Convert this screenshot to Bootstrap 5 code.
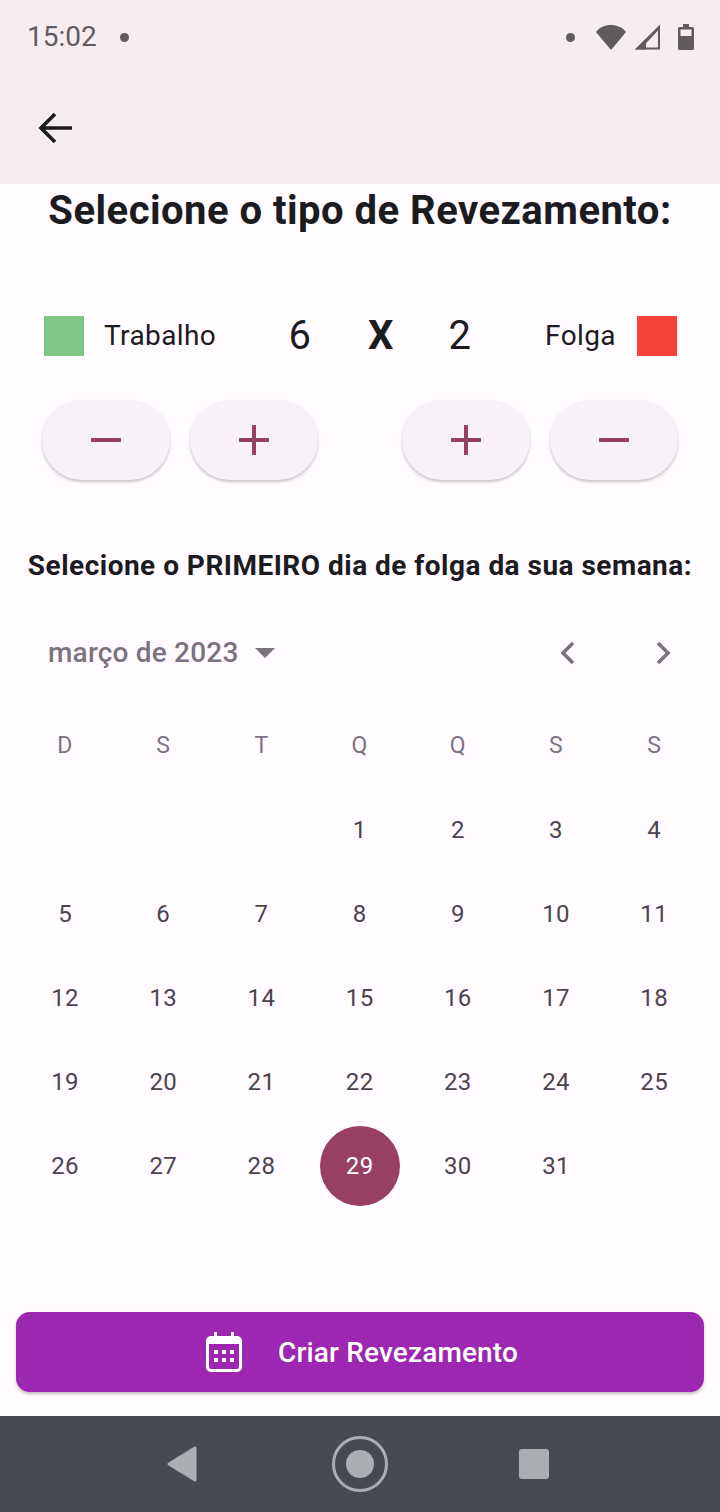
<!DOCTYPE html>
<html lang="pt-BR">
<head>
    <meta charset="UTF-8">
    <meta name="viewport" content="width=device-width, initial-scale=1.0">
    <title>Revezamento</title>
    <link href="https://cdn.jsdelivr.net/npm/bootstrap@5.3.0/dist/css/bootstrap.min.css" rel="stylesheet">
    <style>
        body { width: 720px; height: 1512px; overflow: hidden; background: #fffbfe; color: #1c1b1f; font-family: Roboto, "Liberation Sans", sans-serif; }
        .app-top { height: 184px; background: #f5edf0; }
        .status-bar { height: 72px; padding: 2px 26px 0 27px; color: #5f5b5e; font-size: 28px; }
        .status-dot { width: 9px; height: 9px; border-radius: 50%; background: #5f5b5e; }
        .dot-left { margin-left: 23px; }
        .icon-wifi { margin-left: 21px; }
        .icon-signal { margin-left: 9px; }
        .icon-battery { margin-left: 18px; }
        .back-row { height: 112px; padding-left: 36px; }
        .page-title { margin: 0; height: 52px; padding-top: 1px; font-size: 40px; font-weight: 700; line-height: 52px; letter-spacing: .48px; }
        .counter-row { margin-top: 80px; height: 40px; padding-left: 44px; font-size: 28px; line-height: 42px; letter-spacing: .4px; }
        .swatch { width: 40px; height: 40px; flex: none; }
        .swatch-green { background: #81c784; }
        .swatch-red { background: #f44336; margin: 0 43px 0 21px; }
        .work-label { width: 140px; margin-left: 20px; }
        .count-num { font-size: 40px; text-align: center; }
        .num-left { width: 112px; }
        .num-x { width: 50px; }
        .num-right { width: 108px; }
        .btn-row { margin-top: 44px; padding-left: 42px; gap: 20px; }
        .round-btn { width: 128px; height: 80px; padding: 0; border: 0; border-radius: 40px; background: #f8f2f8; color: #984061; box-shadow: 0 2px 3px rgba(0,0,0,.22); }
        .round-btn:hover { background: #f8f2f8; }
        .round-gap { margin-left: 64px; }
        .pick-title { margin: 66px 0 0; height: 40px; font-size: 28px; font-weight: 700; line-height: 40px; letter-spacing: .48px; }
        .month-row { margin-top: 46px; height: 40px; padding: 2px 49px 0 48px; color: #79747e; font-size: 28px; font-weight: 500; line-height: 40px; letter-spacing: .2px; }
        .chev-next { margin-left: 79px; }
        .cal-grid { display: grid; grid-template-columns: repeat(7, 98.2px); grid-auto-rows: 84px; margin: 32px 0 0 16px; font-size: 24px; letter-spacing: .4px; color: #49454f; }
        .cal-cell { display: flex; align-items: center; justify-content: center; }
        .cal-head { color: #79747e; font-size: 23px; }
        .cal-sel { width: 80px; height: 80px; border-radius: 50%; background: #984061; color: #fff; }
        .make-btn { width: 688px; height: 80px; margin: 104px 16px 0; padding: 0 0 0 4px; border: 0; border-radius: 14px; background: #9c27b0; color: #fff; font-size: 28px; font-weight: 500; letter-spacing: .15px; box-shadow: 0 2px 3px rgba(0,0,0,.25); }
        .make-btn:hover { background: #9c27b0; color: #fff; }
        .make-label { margin-left: 36px; padding-top: 2px; }
        .sys-nav { height: 96px; margin-top: 24px; background: #464b51; }
        .nav-back { margin-left: 166px; }
        .nav-home { margin-left: 132px; }
        .nav-square { margin-left: 128px; }
    </style>
</head>
<body>
    <header class="app-top">
        <div class="status-bar d-flex align-items-center">
            <span>15:02</span>
            <span class="status-dot dot-left"></span>
            <span class="status-dot ms-auto"></span>
            <svg class="icon-wifi" width="30" height="26" viewBox="0 0 30 26"><path d="M0 8C4 3 9 1 15 1s11 2 15 7L15 26z" fill="#5f5b5e"/></svg>
            <svg class="icon-signal" width="25" height="26" viewBox="0 0 25 26"><path d="M0 25.500L25 .5v25z M7 23.500h16V6.500z" fill="#5f5b5e" fill-rule="evenodd"/><path d="M0 25.500l11-11v11z" fill="#5f5b5e"/></svg>
            <svg class="icon-battery" width="16" height="26" viewBox="0 0 16 26"><path d="M5 0h6v3h3.500A1.500 1.500 0 0 1 16 4.500v20a1.500 1.500 0 0 1-1.500 1.500h-13A1.500 1.500 0 0 1 0 24.500v-20A1.500 1.500 0 0 1 1.500 3H5z" fill="#5f5b5e"/><rect x="2.500" y="5.500" width="11" height="6.500" fill="#f5edf0"/></svg>
        </div>
        <div class="back-row d-flex align-items-center">
            <svg width="40" height="40" viewBox="0 0 40 40"><path d="M36 20H6M19 6L5 20l14 14" fill="none" stroke="#1c1b1f" stroke-width="3.600"/></svg>
        </div>
    </header>

    <h1 class="page-title text-center">Selecione o tipo de Revezamento:</h1>

    <div class="counter-row d-flex align-items-center">
        <span class="swatch swatch-green"></span>
        <span class="work-label">Trabalho</span>
        <span class="count-num num-left">6</span>
        <span class="count-num num-x fw-bold">X</span>
        <span class="count-num num-right">2</span>
        <span class="ms-auto">Folga</span>
        <span class="swatch swatch-red"></span>
    </div>

    <div class="btn-row d-flex">
        <button class="btn round-btn" type="button"><svg width="30" height="30" viewBox="0 0 30 30"><rect y="13" width="30" height="4" fill="currentColor"/></svg></button>
        <button class="btn round-btn" type="button"><svg width="30" height="30" viewBox="0 0 30 30"><path d="M0 13h13V0h4v13h13v4H17v13h-4V17H0z" fill="currentColor"/></svg></button>
        <button class="btn round-btn round-gap" type="button"><svg width="30" height="30" viewBox="0 0 30 30"><path d="M0 13h13V0h4v13h13v4H17v13h-4V17H0z" fill="currentColor"/></svg></button>
        <button class="btn round-btn" type="button"><svg width="30" height="30" viewBox="0 0 30 30"><rect y="13" width="30" height="4" fill="currentColor"/></svg></button>
    </div>

    <h2 class="pick-title text-center">Selecione o PRIMEIRO dia de folga da sua semana:</h2>

    <div class="month-row d-flex align-items-center">
        <span>março de 2023</span>
        <svg class="ms-3" width="20" height="10" viewBox="0 0 20 10"><path d="M0 0h20L10 10z" fill="#79747e"/></svg>
        <svg class="ms-auto" width="16" height="24" viewBox="0 0 16 24"><path d="M13 2L3 12l10 10" fill="none" stroke="#79747e" stroke-width="3.600"/></svg>
        <svg class="chev-next" width="16" height="24" viewBox="0 0 16 24"><path d="M3 2l10 10L3 22" fill="none" stroke="#79747e" stroke-width="3.600"/></svg>
    </div>

    <div class="cal-grid" id="calGrid"></div>

    <button class="btn make-btn d-flex align-items-center justify-content-center" type="button">
        <svg width="36" height="40" viewBox="0 0 36 40"><path d="M8 0h3v4h14V0h3v4h3a5 5 0 0 1 5 5v26a5 5 0 0 1-5 5H5a5 5 0 0 1-5-5V9a5 5 0 0 1 5-5h3z M3 12v23a2 2 0 0 0 2 2h26a2 2 0 0 0 2-2V12z" fill="#fff" fill-rule="evenodd"/><path d="M8 18h4v4H8zM16 18h4v4h-4zM24 18h4v4h-4zM8 26h4v4H8zM16 26h4v4h-4zM24 26h4v4h-4z" fill="#fff"/></svg>
        <span class="make-label">Criar Revezamento</span>
    </button>

    <nav class="sys-nav d-flex align-items-center">
        <svg class="nav-back" width="32" height="36" viewBox="0 0 32 36"><path d="M29 2L3 18l26 16z" fill="#a9afb3" stroke="#a9afb3" stroke-width="3" stroke-linejoin="round"/></svg>
        <svg class="nav-home" width="60" height="60" viewBox="0 0 60 60"><circle cx="30" cy="30" r="26.500" fill="none" stroke="#a9afb3" stroke-width="3"/><circle cx="30" cy="30" r="14" fill="#a9afb3"/></svg>
        <svg class="nav-square" width="32" height="32" viewBox="0 0 32 32"><rect x="1" y="1" width="30" height="30" rx="3" fill="#a9afb3"/></svg>
    </nav>

    <script>
        // Build the month grid: March 2023 starts on a Wednesday
        const grid = document.getElementById('calGrid');
        const cells = ['D', 'S', 'T', 'Q', 'Q', 'S', 'S'].map(d => `<div class="cal-cell cal-head">${d}</div>`);
        for (let i = 0; i < 3; i++) cells.push('<div class="cal-cell"></div>');
        for (let d = 1; d <= 31; d++) {
            const inner = d === 29 ? `<span class="cal-cell cal-sel">${d}</span>` : d;
            cells.push(`<div class="cal-cell">${inner}</div>`);
        }
        grid.innerHTML = cells.join('');
    </script>
    <script src="https://cdn.jsdelivr.net/npm/bootstrap@5.3.0/dist/js/bootstrap.bundle.min.js"></script>
</body>
</html>
